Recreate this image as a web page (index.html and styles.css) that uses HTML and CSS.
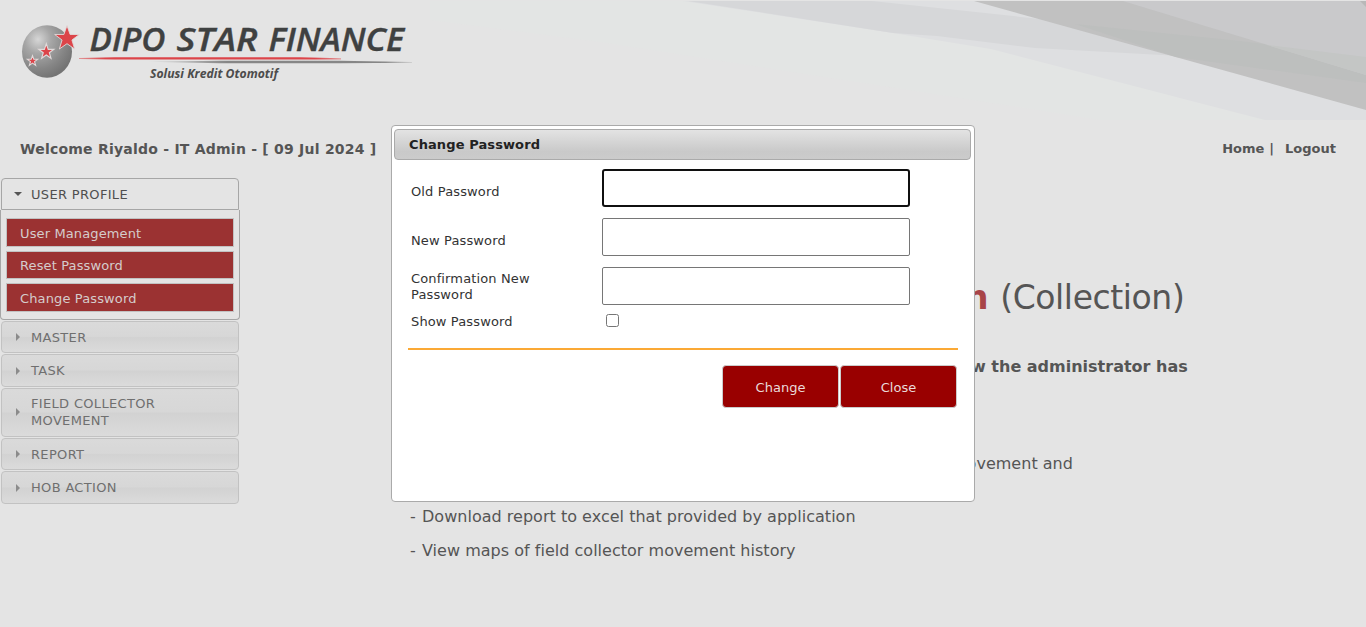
FILE: index.html
```
<!DOCTYPE html>
<html lang="en">
<head>
<meta charset="utf-8">
<title>Dipo Star Finance</title>
<link rel="stylesheet" href="styles.css">
</head>
<body>
<header class="banner">
  <svg class="logo" width="430" height="119" viewBox="0 0 430 119">
    <defs>
      <radialGradient id="ball" cx="0.32" cy="0.27" r="0.75">
        <stop offset="0" stop-color="#d6d6d6"/>
        <stop offset="0.35" stop-color="#a6a6a6"/>
        <stop offset="0.75" stop-color="#858585"/>
        <stop offset="1" stop-color="#747474"/>
      </radialGradient>
      <linearGradient id="redline">
        <stop offset="0" stop-color="#dc4449" stop-opacity="0.5"/>
        <stop offset="0.1" stop-color="#dc4449"/>
        <stop offset="0.9" stop-color="#dc4449"/>
        <stop offset="1" stop-color="#dc4449" stop-opacity="0.5"/>
      </linearGradient>
      <linearGradient id="grayline">
        <stop offset="0" stop-color="#868686" stop-opacity="0.1"/>
        <stop offset="0.3" stop-color="#868686"/>
        <stop offset="0.9" stop-color="#868686"/>
        <stop offset="1" stop-color="#868686" stop-opacity="0.3"/>
      </linearGradient>
      <path id="star" d="M0-10 2.4-3.1 9.5-3.1 3.8 1.2 5.9 8.1 0 4-5.9 8.1-3.8 1.2-9.5-3.1-2.4-3.1Z"/>
    </defs>
    <ellipse cx="47" cy="51.5" rx="25" ry="26.3" fill="url(#ball)"/>
    <g fill="#dc4449" stroke="#e0dada">
      <use href="#star" transform="translate(67 38.5) scale(1.3)" stroke-width=".7"/>
      <use href="#star" transform="translate(46.3 51.8) scale(.8)" stroke-width="1.4"/>
      <use href="#star" transform="translate(32.5 61) scale(.54)" stroke-width="2"/>
    </g>
    <g class="logo-name">
      <text x="89.5" y="51.3" textLength="76" lengthAdjust="spacingAndGlyphs">DIPO</text>
      <text x="176.5" y="51.3" textLength="81" lengthAdjust="spacingAndGlyphs">STAR</text>
      <text x="268.5" y="51.3" textLength="135.5" lengthAdjust="spacingAndGlyphs">FINANCE</text>
    </g>
    <path d="M79 58.1 115 57.2H300L341 58.3V59.4L300 59.6H115L79 58.9Z" fill="url(#redline)"/>
    <path d="M148 61.8 220 60.8H340L412 62.1V62.8L340 63.2H220Z" fill="url(#grayline)"/>
    <text class="logo-tag" x="150" y="78" textLength="128" lengthAdjust="spacingAndGlyphs">Solusi Kredit Otomotif</text>
  </svg>
  <svg class="rays" width="936" height="119" viewBox="430 1 936 119">
    <path d="M430 1H1366V120H1100L1025 108 600 42 430 20Z" fill="#e3e5e4"/>
    <path d="M683 1H1366V120H1265L991 49 893 33Z" fill="#dedfe1"/>
    <path d="M688 1H872L1059 21 1180 56 1035 48 937 36 893 33Z" fill="#d6d7d9"/>
    <path d="M974 1H1366V110Z" fill="#c1c1c1"/>
    <path d="M1075 24 1240 41 1366 57V83L1176 57Z" fill="#bdbfbe"/>
    <path d="M1123 1H1366V75Z" fill="#c9c9cb"/>
    <path d="M1267 45 1366 57V75Z" fill="#c4c6c5"/>
    <path d="M1360 1H1366V7Z" fill="#b8b8b8"/>
  </svg>
</header>

<div class="topbar">
  <strong class="welcome">Welcome Riyaldo - IT Admin - [ 09 Jul 2024 ]</strong>
  <nav class="links"><a>Home</a><span class="bar">|</span><a>Logout</a></nav>
</div>

<div class="page">
  <aside class="menu">
    <div class="head open"><i class="arrow down"></i><span>USER PROFILE</span></div>
    <div class="panel">
      <a class="item first">User Management</a>
      <a class="item">Reset Password</a>
      <a class="item third">Change Password</a>
    </div>
    <div class="head"><i class="arrow"></i><span>MASTER</span></div>
    <div class="head tall"><i class="arrow"></i><span>TASK</span></div>
    <div class="head double"><i class="arrow"></i><span>FIELD COLLECTOR<br>MOVEMENT</span></div>
    <div class="head"><i class="arrow"></i><span>REPORT</span></div>
    <div class="head tall"><i class="arrow"></i><span>HOB ACTION</span></div>
  </aside>
  <main class="content">
    <h1 class="title"><b>n</b> <span>(Collection)</span></h1>
    <p class="lead">w the administrator has</p>
    <p class="row movement">movement and</p>
    <p class="row download"><span class="dash">-</span>Download report to excel that provided by application</p>
    <p class="row maps"><span class="dash">-</span>View maps of field collector movement history</p>
  </main>
</div>

<div class="dialog">
  <div class="dialog-title">Change Password</div>
  <form class="fields">
    <label for="old">Old Password</label><input class="box focus" id="old" type="password">
    <label for="new">New Password</label><input class="box" id="new" type="password">
    <label for="conf">Confirmation New Password</label><input class="box" id="conf" type="password">
    <label for="show">Show Password</label><input class="check" id="show" type="checkbox">
  </form>
  <div class="actions">
    <button class="btn">Change</button>
    <button class="btn">Close</button>
  </div>
</div>
</body>
</html>
```
FILE: styles.css
```
* { box-sizing: border-box; }
body {
  margin: 0;
  height: 627px;
  overflow: hidden;
  position: relative;
  background: #e4e4e4;
  color: #555;
  font: 13px/16px "DejaVu Sans", Verdana, sans-serif;
}
.banner { display: flex; height: 120px; padding-top: 1px; }
.logo, .rays { display: block; flex: none; }
.logo { margin-top: -1px; }
.logo-name { font: italic 600 33px "Open Sans", sans-serif; fill: #3f4141; stroke: #3f4141; stroke-width: .4px; }
.logo-tag { font: italic 700 11.5px "Open Sans", sans-serif; fill: #4c4c4c; }

.topbar {
  display: flex;
  justify-content: space-between;
  height: 58px;
  padding: 20px 30px 0 20px;
  line-height: 18px;
}
.welcome { font-size: 14px; letter-spacing: .23px; }
.links { font-weight: bold; }
.bar { margin: 0 11px 0 5px; }

.page { display: flex; }
.menu { width: 240px; }
.head {
  display: flex;
  align-items: center;
  width: 238px;
  height: 32px;
  margin: 0 0 1px 1px;
  padding-left: 13px;
  border: 1px solid #c2c2c2;
  border-radius: 4px;
  background: linear-gradient(#dadada, #d7d7d7 48%, #d2d2d2 52%, #dbdbdb);
  color: #6f6f6f;
  letter-spacing: .33px;
  line-height: 17px;
}
.head span { padding-left: 11px; }
.tall { height: 33px; }
.double { height: 49px; padding-bottom: 2px; }
.open {
  height: 32px;
  margin-bottom: 0;
  padding-left: 12px;
  border-color: #a6a6a6;
  border-radius: 4px 4px 0 0;
  background: #e4e4e4;
  color: #4f4f4f;
}
.arrow {
  width: 0;
  height: 0;
  margin-left: 1px;
  border: solid transparent;
  border-width: 4px 0 4px 4px;
  border-left-color: #8b8b8b;
}
.arrow.down {
  margin-left: 0;
  border-width: 4px 4px 0;
  border-color: #555 transparent transparent;
}
.head .down + span { padding-left: 9px; }
.panel {
  width: 240px;
  height: 110px;
  margin-bottom: 1px;
  padding: 8px 5px 0;
  border: 1px solid #a6a6a6;
  border-top: 0;
  border-radius: 0 0 4px 4px;
}
.item {
  display: block;
  height: 28px;
  margin-bottom: 4px;
  padding-left: 13px;
  border: 1px solid #c2c2c2;
  background: #9b3232;
  color: #d5cccc;
  letter-spacing: .13px;
  line-height: 27px;
}
.first { height: 29px; line-height: 29px; }
.third { height: 29px; line-height: 29px; }

.content { flex: 1; padding-left: 170px; font-size: 16px; }
.title {
  margin: 98px 0 0 555px;
  font-size: 33px;
  line-height: 44px;
  font-weight: normal;
  letter-spacing: -.4px;
  word-spacing: 2px;
  white-space: nowrap;
}
.title b { color: #a84448; }
.lead { margin: 37px 0 0 561px; font-weight: bold; line-height: 20px; }
.row { margin: 0; letter-spacing: .02px; line-height: 20px; }
.movement { margin: 77px 0 0 541px; }
.download { margin-top: 33px; }
.maps { margin-top: 14px; }
.dash { display: inline-block; width: 12px; }

.dialog {
  position: absolute;
  left: 391px;
  top: 125px;
  width: 584px;
  height: 377px;
  padding: 3px 3px 0 2px;
  border: 1px solid #aaa;
  border-radius: 4px;
  background: #fff;
  color: #333;
}
.dialog-title {
  height: 31px;
  padding-left: 14px;
  border: 1px solid #aaa;
  border-radius: 4px;
  background: linear-gradient(#e3e3e3, #c9c9c9 75%, #cbcbcb);
  color: #222;
  font-weight: bold;
  letter-spacing: .1px;
  line-height: 30px;
}
.fields {
  display: grid;
  grid-template-columns: 191px 308px;
  grid-template-rows: 38px 38px 38px 13px;
  row-gap: 11px;
  align-items: center;
  align-content: start;
  width: 550px;
  height: 190px;
  margin: 0 0 0 14px;
  padding: 9px 0 0 3px;
  border-bottom: 2px solid #fba935;
}
.fields label { width: 160px; padding-top: 8px; letter-spacing: .13px; }
.fields label[for="conf"] { padding-top: 1px; }
.fields label[for="show"] { padding: 0; margin-top: -1px; }
.box {
  width: 308px;
  height: 38px;
  margin: 0;
  border: 1px solid #767676;
  border-radius: 2px;
  background: #fff;
}
.focus { border: 2px solid #101010; border-radius: 3px; outline: 0; }
.check { width: 13px; height: 13px; margin: -4px 0 0 4px; }
.actions { display: flex; justify-content: flex-end; gap: 1px; margin: 15px 14px 0 0; }
.btn {
  width: 117px;
  height: 43px;
  padding: 2px 0 0;
  border: 1px solid #ccc;
  border-radius: 4px;
  background: #900;
  color: #eadada;
  font: 13px "DejaVu Sans", Verdana, sans-serif;
}
```
